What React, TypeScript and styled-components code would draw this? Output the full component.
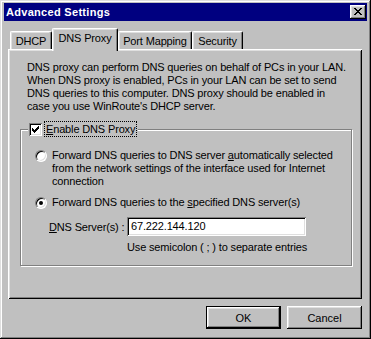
import styled, { createGlobalStyle } from 'styled-components';

const GlobalStyle = createGlobalStyle`
  html, body {
    margin: 0;
    padding: 0;
    background: #c0c0c0;
  }
  body {
    font-family: "Liberation Sans", Arial, sans-serif;
    font-size: 11px;
    letter-spacing: -0.15px;
    color: #000;
  }
`;

const DESCRIPTION = [
  'DNS proxy can perform DNS queries on behalf of PCs in your LAN.',
  'When DNS proxy is enabled, PCs in your LAN can be set to send',
  'DNS queries to this computer. DNS proxy should be enabled in',
  "case you use WinRoute's DHCP server.",
];

const TABS = [
  { label: 'DHCP', width: 42 },
  { label: 'DNS Proxy', width: 66, active: true },
  { label: 'Port Mapping', width: 74 },
  { label: 'Security', width: 51 },
];

// pixel patterns for the classic glyphs
const CLOSE_X = ['11000011', '01100110', '00111100', '00011000', '00111100', '01100110', '11000011'];
const CHECK = ['0000001', '0000011', '1000111', '1101110', '1111100', '0111000', '0010000'];

function PixelGlyph({ rows }: { rows: string[] }) {
  const w = rows[0].length;
  return (
    <svg width={w} height={rows.length} viewBox={`0 0 ${w} ${rows.length}`} shapeRendering="crispEdges">
      {rows.map((row, y) =>
        row.split('').map((c, x) => (c === '1' ? <rect key={`${x}-${y}`} x={x} y={y} width={1} height={1} fill="#000" /> : null))
      )}
    </svg>
  );
}

function App() {
  return (
    <>
      <GlobalStyle />
      <Window>
        <TitleBar>
          <Title>Advanced Settings</Title>
          <CloseButton>
            <PixelGlyph rows={CLOSE_X} />
          </CloseButton>
        </TitleBar>

        <TabStrip>
          {TABS.map((t) => (
            <Tab key={t.label} $active={t.active} $w={t.width}>
              {t.label}
            </Tab>
          ))}
        </TabStrip>

        <Panel>
          <Description>
            {DESCRIPTION.map((line) => (
              <Line key={line}>{line}</Line>
            ))}
          </Description>

          <GroupBox>
            <Legend>
              <CheckBox>
                <PixelGlyph rows={CHECK} />
              </CheckBox>
              <FocusLabel>
                <u>E</u>nable DNS Proxy
              </FocusLabel>
            </Legend>

            <GroupContent>
              <RadioRow>
                <Radio />
                <RadioText>
                  <Line>
                    Forward DNS queries to DNS server <u>a</u>utomatically selected
                  </Line>
                  <Line>from the network settings of the interface used for Internet</Line>
                  <Line>connection</Line>
                </RadioText>
              </RadioRow>

              <RadioRow $gap={8}>
                <Radio $checked />
                <RadioText>
                  <Line>
                    Forward DNS queries to the <u>s</u>pecified DNS server(s)
                  </Line>
                </RadioText>
              </RadioRow>

              <ServerRow>
                <ServerLabel>
                  <u>D</u>NS Server(s) :
                </ServerLabel>
                <TextField>67.222.144.120</TextField>
              </ServerRow>
              <Hint>Use semicolon ( ; ) to separate entries</Hint>
            </GroupContent>
          </GroupBox>
        </Panel>

        <ButtonRow>
          <Button $default>OK</Button>
          <Button>Cancel</Button>
        </ButtonRow>
      </Window>
    </>
  );
}

export default App;

const raised = `
  box-shadow: inset -1px -1px #000, inset 1px 1px #fff, inset -2px -2px #808080, inset 2px 2px #dfdfdf;
`;

const sunken = `
  box-shadow: inset 1px 1px #808080, inset -1px -1px #fff, inset 2px 2px #000, inset -2px -2px #dfdfdf;
`;

const Window = styled.div`
  box-sizing: border-box;
  width: 371px;
  height: 339px;
  display: flex;
  flex-direction: column;
  padding: 3px 4px 0 4px;
  background: #c0c0c0;
  box-shadow: inset -1px -1px #000, inset 1px 1px #dfdfdf, inset -2px -2px #808080, inset 2px 2px #fff;
`;

const TitleBar = styled.div`
  height: 18px;
  display: flex;
  align-items: center;
  justify-content: space-between;
  padding: 0 1px 0 2px;
  background: #000080;
  color: #fff;
`;

const Title = styled.span`
  font-weight: bold;
  font-size: 11px;
  letter-spacing: 0.3px;
`;

const CloseButton = styled.div`
  box-sizing: border-box;
  width: 16px;
  height: 14px;
  display: flex;
  align-items: center;
  justify-content: center;
  padding-bottom: 1px;
  background: #c0c0c0;
  ${raised}
`;

const TabStrip = styled.div`
  height: 21px;
  margin-top: 7px;
  padding-left: 6px;
  display: flex;
  align-items: flex-end;
`;

const Tab = styled.div<{ $active?: boolean; $w: number }>`
  box-sizing: border-box;
  position: relative;
  z-index: ${(p) => (p.$active ? 1 : 0)};
  width: ${(p) => p.$w}px;
  height: ${(p) => (p.$active ? 23 : 18)}px;
  margin-bottom: ${(p) => (p.$active ? -2 : 0)}px;
  padding-bottom: ${(p) => (p.$active ? 4 : 0)}px;
  display: flex;
  align-items: center;
  justify-content: center;
  background: #c0c0c0;
  border-top: 1px solid #fff;
  border-left: 1px solid #fff;
  border-right: 1px solid #000;
  border-radius: 2px 2px 0 0;
  box-shadow: inset -1px 0 #808080, inset 1px 1px #dfdfdf;
  white-space: nowrap;
`;

const Panel = styled.div`
  box-sizing: border-box;
  height: 250px;
  margin: 0 5px 0 4px;
  padding: 12px 10px 0 12px;
  box-shadow: inset 1px 1px #fff, inset -1px -1px #000, inset 2px 2px #dfdfdf, inset -2px -2px #808080;
`;

const Description = styled.div`
  padding-left: 7px;
`;

const Line = styled.div`
  height: 13px;
  line-height: 13px;
  white-space: nowrap;
`;

const GroupBox = styled.fieldset`
  margin: 8px 0 0 0;
  padding: 0;
  min-width: 0;
  border: 1px solid #808080;
  box-shadow: 1px 1px 0 #fff, inset 1px 1px 0 #fff;
`;

const Legend = styled.legend`
  margin-left: 7px;
  padding: 0 1px;
  height: 16px;
  display: flex;
  align-items: center;
  background: #c0c0c0;
`;

const CheckBox = styled.div`
  box-sizing: border-box;
  width: 13px;
  height: 13px;
  display: flex;
  align-items: center;
  justify-content: center;
  background: #fff;
  ${sunken}
`;

const FocusLabel = styled.span`
  margin-left: 2px;
  padding: 0 1px;
  height: 14px;
  line-height: 14px;
  border: 1px dotted #000;
`;

const GroupContent = styled.div`
  padding: 12px 10px 11px 14px;
`;

const RadioRow = styled.div<{ $gap?: number }>`
  display: flex;
  align-items: flex-start;
  gap: 5px;
  margin-top: ${(p) => p.$gap ?? 0}px;
`;

const Radio = styled.div<{ $checked?: boolean }>`
  box-sizing: border-box;
  flex: none;
  width: 12px;
  height: 12px;
  margin-top: 1px;
  border-radius: 50%;
  background: #fff;
  border: 1px solid;
  border-color: #808080 #fff #fff #808080;
  box-shadow: inset 1px 1px #000, inset -1px -1px #dfdfdf;
  display: flex;
  align-items: center;
  justify-content: center;

  &::after {
    content: '';
    display: ${(p) => (p.$checked ? 'block' : 'none')};
    width: 4px;
    height: 4px;
    border-radius: 50%;
    background: #000;
  }
`;

const RadioText = styled.div``;

const ServerRow = styled.div`
  display: flex;
  align-items: center;
  margin-top: 8px;
  padding-left: 14px;
`;

const ServerLabel = styled.span`
  width: 78px;
  white-space: nowrap;
`;

const TextField = styled.div`
  box-sizing: border-box;
  width: 179px;
  height: 19px;
  padding: 3px 4px 0;
  background: #fff;
  ${sunken}
`;

const Hint = styled.div`
  margin: 5px 0 0 92px;
  line-height: 13px;
`;

const ButtonRow = styled.div`
  display: flex;
  justify-content: flex-end;
  gap: 6px;
  margin: 7px 5px 0 0;
`;

const Button = styled.button<{ $default?: boolean }>`
  box-sizing: border-box;
  width: 75px;
  height: 23px;
  padding: 0;
  font: inherit;
  color: #000;
  background: #c0c0c0;
  border: ${(p) => (p.$default ? '1px solid #000' : 'none')};
  ${raised}
`;
